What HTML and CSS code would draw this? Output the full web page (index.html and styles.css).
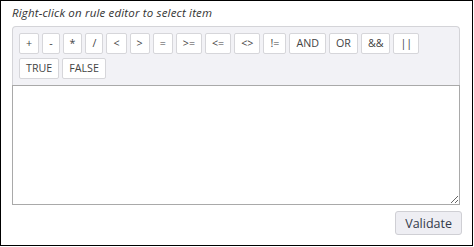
FILE: index.html
```html
<!DOCTYPE html>
<html>
<head>
<meta charset="utf-8">
<link rel="stylesheet" href="styles.css">
</head>
<body>
<div class="frame">
  <div class="hint">Right-click on rule editor to select item</div>
  <div class="editor">
    <div class="toolbar">
      <button class="op">+</button><button class="op">-</button><button class="op">*</button><button class="op">/</button><button class="op">&lt;</button><button class="op">&gt;</button><button class="op">=</button><button class="op">&gt;=</button><button class="op">&lt;=</button><button class="op">&lt;&gt;</button><button class="op">!=</button><button class="op">AND</button><button class="op">OR</button><button class="op">&amp;&amp;</button><button class="op">||</button><button class="op">TRUE</button><button class="op">FALSE</button>
    </div>
    <textarea class="rule"></textarea>
  </div>
  <div class="actions">
    <button class="validate">Validate</button>
  </div>
</div>
</body>
</html>
```
FILE: styles.css
```css
html, body {
  margin: 0;
  padding: 0;
  background: #fff;
}
.frame {
  box-sizing: border-box;
  width: 473px;
  height: 246px;
  border: 1px solid #000;
  padding: 3px 12px 0 11px;
  font-family: "Open Sans", sans-serif;
  color: #333;
}
.hint {
  font-style: italic;
  font-size: 11.5px;
  letter-spacing: 0.17px;
  line-height: 17px;
  color: #333;
  margin-bottom: 5px;
}
.editor {
  display: flex;
  flex-direction: column;
  width: 448px;
}
.toolbar {
  display: flex;
  flex-wrap: wrap;
  gap: 4px 3px;
  padding: 6px;
  background: #f2f2f6;
  border: 1px solid #d4d4d8;
  border-bottom: none;
  border-radius: 4px 4px 0 0;
}
.op {
  font-family: "Open Sans", sans-serif;
  font-size: 10.7px;
  line-height: 19px;
  height: 21px;
  padding: 0 6px;
  background: #fff;
  color: #444;
  border: 1px solid #d6d6da;
  border-radius: 2px;
  margin: 0;
}
.rule {
  box-sizing: border-box;
  width: 448px;
  height: 120px;
  margin: 0;
  border: 1px solid #a9a9a9;
  background: #fff;
  resize: vertical;
  display: block;
}
.actions {
  display: flex;
  justify-content: flex-end;
  margin-top: 6px;
  margin-right: -2px;
}
.validate {
  font-family: "Open Sans", sans-serif;
  font-size: 12.5px;
  color: #333a4a;
  height: 24px;
  padding: 0 9px;
  background: #eeeef3;
  border: 1px solid #cfcfd4;
  border-radius: 3px;
  margin: 0;
}
```
